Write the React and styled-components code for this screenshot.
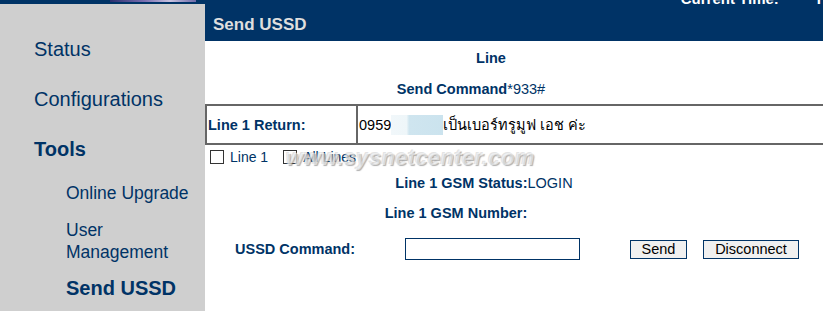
import styled, { createGlobalStyle } from "styled-components";

const GlobalStyle = createGlobalStyle`
  html, body {
    margin: 0;
    padding: 0;
    background: #ffffff;
    font-family: "Liberation Sans", Arial, sans-serif;
  }
`;

const Page = styled.div`
  display: grid;
  grid-template-columns: 205px 1fr;
  width: 823px;
  height: 311px;
  overflow: hidden;
`;

const Sidebar = styled.nav`
  background: #cfcfcf;
  border-top: 4px solid #003366;
  padding: 20px 0 0 34px;
  display: flex;
  flex-direction: column;
  position: relative;
`;

const LogoTail = styled.div`
  position: absolute;
  top: -4px;
  left: 110px;
  width: 86px;
  height: 2px;
  background: linear-gradient(to right, #2b2f6e, #7a6fb0 40%, #c9c3e0 70%, #6d6aa8);
`;

const MenuItem = styled.div`
  height: 50px;
  line-height: 50px;
  font-size: 20px;
  color: #003366;
  font-weight: ${(p) => (p.$active ? "bold" : "normal")};
`;

const SubList = styled.div`
  display: flex;
  flex-direction: column;
  gap: 14.5px;
  padding: 8px 0 0 32px;
`;

const SubItem = styled.div`
  line-height: 22px;
  font-size: ${(p) => (p.$active ? "20px" : "17.5px")};
  font-weight: ${(p) => (p.$active ? "bold" : "normal")};
  color: #003366;
`;

const Main = styled.main`
  display: flex;
  flex-direction: column;
  background: #ffffff;
`;

const Header = styled.header`
  height: 41px;
  background: #003366;
  overflow: hidden;
  display: flex;
  flex-direction: column;
`;

const TimeBar = styled.div`
  height: 6px;
  display: flex;
  align-items: flex-end;
  justify-content: flex-end;
  gap: 38px;
  padding-right: 2px;
  color: #ffffff;
  font-size: 15px;
  font-weight: bold;
  line-height: 1;
`;

const HeaderTitle = styled.h1`
  margin: 0;
  padding: 8px 0 0 8px;
  font-size: 17px;
  font-weight: bold;
  color: #dedede;
  line-height: 22px;
`;

const CenterRow = styled.div`
  height: ${(p) => p.$h}px;
  display: flex;
  align-items: center;
  justify-content: center;
  padding-right: ${(p) => p.$shift}px;
  font-size: 14.5px;
  color: #003366;
`;

const Label = styled.b`
  font-weight: bold;
  color: #003366;
`;

const Value = styled.span`
  color: #003366;
`;

const ReturnTable = styled.div`
  display: grid;
  grid-template-columns: 151px 1fr;
  border: 2px solid #666666;
  border-right: none;
  height: 37px;
  margin-top: 1px;
  font-size: 14.5px;
`;

const Cell = styled.div`
  display: flex;
  align-items: center;
  padding-left: 1px;
  border-right: ${(p) => (p.$divider ? "2px solid #666666" : "none")};
  color: ${(p) => (p.$dark ? "#000000" : "#003366")};
  font-weight: ${(p) => (p.$bold ? "bold" : "normal")};
`;

const Masked = styled.span`
  display: inline-block;
  width: 52px;
  height: 20px;
  background: linear-gradient(to right, #f1f7fa 0%, #eef6f9 30%, #cfe5ef 35%, #cbe3ee 100%);
`;

const CheckRow = styled.div`
  position: relative;
  height: 24px;
  display: flex;
  align-items: center;
  padding-left: 5px;
  font-size: 14px;
  color: #003366;
`;

const Check = styled.input.attrs({ type: "checkbox" })`
  appearance: none;
  margin: 0 6px 0 0;
  width: 14px;
  height: 14px;
  border: 1px solid #333333;
  background: #ffffff;
`;

const CheckLabel = styled.label`
  display: flex;
  align-items: center;
  margin-right: 15px;
`;

const Watermark = styled.div`
  position: absolute;
  left: 81px;
  top: 0px;
  font-size: 22px;
  font-weight: bold;
  font-style: italic;
  color: rgba(255, 255, 255, 0.55);
  text-shadow: 1px 1px 1px rgba(110, 110, 110, 0.55), -1px -1px 0 rgba(200, 200, 200, 0.5);
  letter-spacing: 0.3px;
  pointer-events: none;
`;

const CommandRow = styled.div`
  height: 40px;
  display: grid;
  grid-template-columns: 170px 175px 50px 57px 16px 96px;
  align-items: center;
  padding-left: 30px;
  font-size: 14.5px;
`;

const CommandInput = styled.input`
  grid-column: 2;
  height: 22px;
  box-sizing: border-box;
  border: 1px solid #003366;
  margin: 0;
  padding: 0 3px;
`;

const Button = styled.button`
  grid-column: ${(p) => p.$col};
  height: 19px;
  box-sizing: border-box;
  border: 1px solid #003366;
  background: #f0f0f0;
  font-family: "Liberation Sans", Arial, sans-serif;
  font-size: 14.5px;
  color: #000000;
  padding: 0;
  line-height: 17px;
`;

export default function App() {
  return (
    <>
      <GlobalStyle />
      <Page>
        <Sidebar>
          <LogoTail />
          <MenuItem>Status</MenuItem>
          <MenuItem>Configurations</MenuItem>
          <MenuItem $active>Tools</MenuItem>
          <SubList>
            <SubItem>Online Upgrade</SubItem>
            <SubItem>
              User
              <br />
              Management
            </SubItem>
            <SubItem $active>Send USSD</SubItem>
          </SubList>
        </Sidebar>
        <Main>
          <Header>
            <TimeBar>
              <span>Current Time:</span>
              <span>I</span>
            </TimeBar>
            <HeaderTitle>Send USSD</HeaderTitle>
          </Header>
          <CenterRow $h={34} $shift={46}>
            <Label>Line</Label>
          </CenterRow>
          <CenterRow $h={28} $shift={86}>
            <Label>Send Command</Label>
            <Value>*933#</Value>
          </CenterRow>
          <ReturnTable>
            <Cell $divider $bold>
              Line 1 Return:
            </Cell>
            <Cell $dark>
              0959
              <Masked />
              เป็นเบอร์ทรูมูฟ เอช ค่ะ
            </Cell>
          </ReturnTable>
          <CheckRow>
            <CheckLabel>
              <Check />
              Line 1
            </CheckLabel>
            <CheckLabel>
              <Check />
              All Lines
            </CheckLabel>
            <Watermark>www.sysnetcenter.com</Watermark>
          </CheckRow>
          <CenterRow $h={28} $shift={60}>
            <Label>Line 1 GSM Status:</Label>
            <Value>LOGIN</Value>
          </CenterRow>
          <CenterRow $h={32} $shift={116}>
            <Label>Line 1 GSM Number:</Label>
          </CenterRow>
          <CommandRow>
            <Label>USSD Command:</Label>
            <CommandInput />
            <Button $col={4}>Send</Button>
            <Button $col={6}>Disconnect</Button>
          </CommandRow>
        </Main>
      </Page>
    </>
  );
}
